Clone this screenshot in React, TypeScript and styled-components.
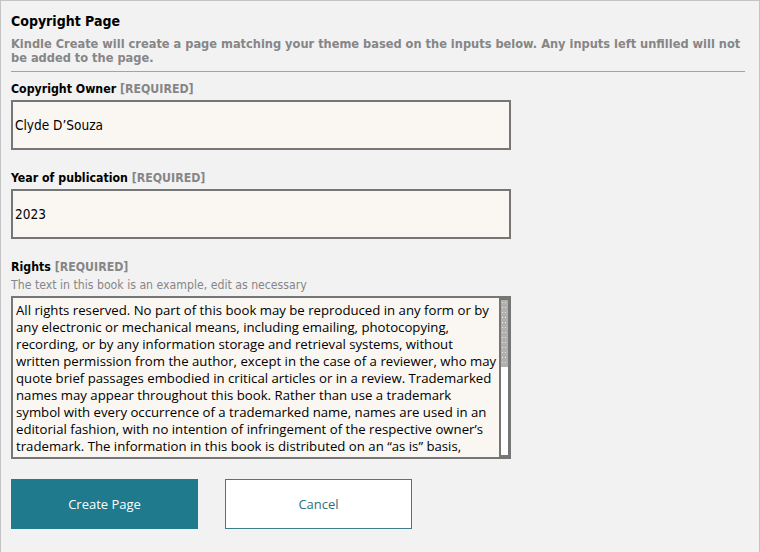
import styled, { createGlobalStyle } from "styled-components";

const rightsText =
  "All rights reserved. No part of this book may be reproduced in any form or by any electronic or mechanical means, including emailing, photocopying, recording, or by any information storage and retrieval systems, without written permission from the author, except in the case of a reviewer, who may quote brief passages embodied in critical articles or in a review. Trademarked names may appear throughout this book. Rather than use a trademark symbol with every occurrence of a trademarked name, names are used in an editorial fashion, with no intention of infringement of the respective owner\u2019s trademark. The information in this book is distributed on an \u201cas is\u201d basis, without warranty. Although every precaution has been taken in the preparation of this work, neither the author nor the publisher shall have any liability to any person or entity with respect to any loss or damage caused or alleged to be caused directly or indirectly by the information contained in this book.";

function App() {
  return (
    <>
      <GlobalStyle />
      <Panel>
        <Title>Copyright Page</Title>
        <Intro>
          Kindle Create will create a page matching your theme based on the inputs below. Any inputs
          left unfilled will not be added to the page.
        </Intro>
        <Divider />
        <Field>
          <Label>
            Copyright Owner <Required>[REQUIRED]</Required>
          </Label>
          <TextInput defaultValue={"Clyde D\u2019Souza"} />
        </Field>
        <Field>
          <Label>
            Year of publication <Required>[REQUIRED]</Required>
          </Label>
          <TextInput defaultValue="2023" />
        </Field>
        <Field>
          <Label>
            Rights <Required>[REQUIRED]</Required>
          </Label>
          <Hint>The text in this book is an example, edit as necessary</Hint>
          <AreaFrame>
            <RightsArea defaultValue={rightsText} />
            <ScrollRail>
              <ScrollTrack>
                <ScrollThumb $height={67} />
              </ScrollTrack>
            </ScrollRail>
          </AreaFrame>
        </Field>
        <ButtonRow>
          <PrimaryButton>Create Page</PrimaryButton>
          <SecondaryButton>Cancel</SecondaryButton>
        </ButtonRow>
      </Panel>
    </>
  );
}

const GlobalStyle = createGlobalStyle`
  html, body {
    margin: 0;
    padding: 0;
    background: #f2f2f2;
  }
  body {
    font-family: "DejaVu Sans Condensed", "DejaVu Sans", sans-serif;
  }
`;

const Panel = styled.div`
  box-sizing: border-box;
  width: 760px;
  height: 552px;
  border: 1px solid #c4c4c4;
  border-bottom: none;
  background: #f2f2f2;
  padding: 10px 14px 0 10px;
  display: flex;
  flex-direction: column;
`;

const Title = styled.h1`
  margin: 0;
  font-size: 14px;
  font-weight: bold;
  line-height: 20px;
  color: #000;
`;

const Intro = styled.p`
  margin: 6px 0 0;
  font-size: 12.7px;
  font-weight: bold;
  line-height: 14px;
  color: #868686;
`;

const Divider = styled.hr`
  margin: 6px 0 0;
  width: 734px;
  border: none;
  border-top: 1px solid #a4a4a4;
`;

const Field = styled.div`
  display: flex;
  flex-direction: column;
  margin-top: 9px;
  & + & {
    margin-top: 20px;
  }
`;

const Label = styled.div`
  font-size: 12.25px;
  font-weight: bold;
  line-height: 16px;
  color: #000;
  margin-bottom: 3px;
`;

const Required = styled.span`
  color: #868686;
`;

const Hint = styled.div`
  font-size: 12.2px;
  line-height: 14px;
  color: #868686;
  margin-top: 0;
  margin-bottom: 4px;
`;

const TextInput = styled.input`
  box-sizing: border-box;
  width: 500px;
  height: 50px;
  border: 2px solid #767676;
  background: #faf7f2;
  padding: 0 2px;
  font-family: "DejaVu Sans Condensed", "DejaVu Sans", sans-serif;
  font-size: 13.5px;
  color: #000;
  outline: none;
`;

const AreaFrame = styled.div`
  box-sizing: border-box;
  width: 500px;
  height: 163px;
  border: 2px solid #767676;
  background: #faf7f2;
  display: flex;
`;

const RightsArea = styled.textarea`
  flex: 1;
  min-width: 0;
  border: none;
  background: transparent;
  padding: 4px 0 0 3px;
  margin: 0;
  font-family: "Open Sans", "Noto Sans", sans-serif;
  font-size: 13.2px;
  line-height: 17px;
  color: #000;
  resize: none;
  outline: none;
  overflow: hidden;
`;

const ScrollRail = styled.div`
  width: 10px;
  background: #767676;
  padding: 2px 1px 2px 2px;
  box-sizing: border-box;
  display: flex;
`;

const ScrollTrack = styled.div`
  flex: 1;
  background: #ffffff;
`;

const ScrollThumb = styled.div<{ $height: number }>`
  height: ${(p) => p.$height}px;
  background-color: #b0b0b0;
  background-image: radial-gradient(circle, #ece8cf 0.5px, transparent 0.8px);
  background-size: 3px 5px;
`;

const ButtonRow = styled.div`
  display: flex;
  gap: 27px;
  margin-top: 20px;
`;

const BaseButton = styled.button`
  box-sizing: border-box;
  width: 187px;
  height: 50px;
  font-family: "Open Sans", "Noto Sans", sans-serif;
  font-size: 13px;
  cursor: pointer;
`;

const PrimaryButton = styled(BaseButton)`
  background: #1e7a8c;
  border: none;
  color: #ffffff;
`;

const SecondaryButton = styled(BaseButton)`
  background: #ffffff;
  border: 1px solid #3f7c89;
  color: #2f6f80;
`;

export default App;
